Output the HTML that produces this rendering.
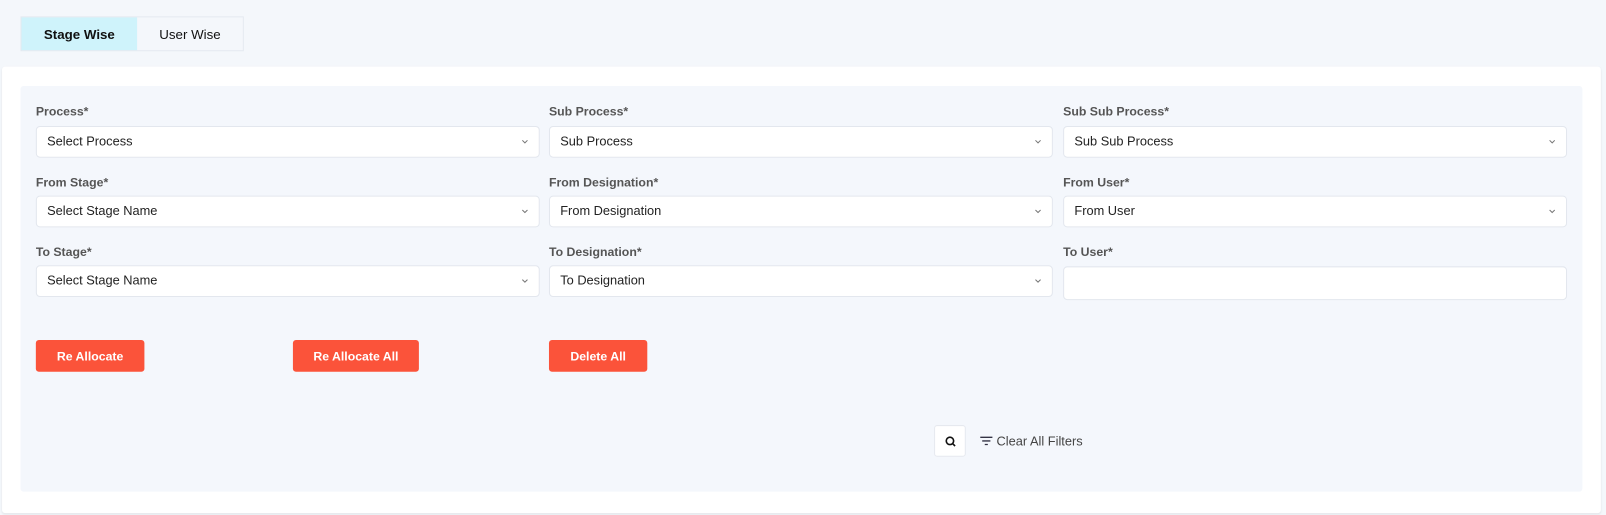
<!DOCTYPE html>
<html><head><style>
*{box-sizing:border-box;margin:0;padding:0}
body{width:1606px;height:515px;background:#f4f7fb;font-family:"Liberation Sans",sans-serif;overflow:hidden}
#w{position:relative;width:1568px;height:503px;transform:scale(1.0242);transform-origin:0 0}
.tabs{position:absolute;left:20px;top:16px;height:34px;width:218px;border:1px solid #e3e8ef;display:flex;font-size:13px;color:#111}
.tabs div{display:flex;align-items:center;justify-content:center}
.t1{width:113px;background:#cff3fb;font-weight:bold}
.t2{flex:1;background:#f4f7fb}
.card{position:absolute;left:2px;top:65px;width:1561px;height:436px;background:#fff;border-radius:3px;box-shadow:0 1px 2px rgba(0,0,0,.08)}
.panel{position:absolute;left:20px;top:84px;width:1525px;height:396px;background:#f4f7fc;border-radius:3px}
.lab{position:absolute;font-size:12px;font-weight:bold;color:#555}
.inp{position:absolute;width:492px;height:31px;background:#fff;border:1px solid #e3e7ee;border-radius:4px;font-size:12.5px;color:#222;padding-left:10px;line-height:29px}
.inp svg{position:absolute;right:10px;top:12px}
.btn{position:absolute;top:332px;height:31px;background:#fb533a;color:#fff;font-size:12px;font-weight:bold;border-radius:3px;display:flex;align-items:center;justify-content:center}
</style></head><body><div id="w">
<div class="tabs"><div class="t1">Stage Wise</div><div class="t2">User Wise</div></div>
<div class="card"></div>
<div class="panel"></div>

<div class="lab" style="left:35px;top:102px">Process*</div>
<div class="lab" style="left:536px;top:102px">Sub Process*</div>
<div class="lab" style="left:1038px;top:102px">Sub Sub Process*</div>
<div class="inp" style="left:35px;top:123px">Select Process<svg width="7" height="5"><path d="M1 1l2.5 2.5L6 1" stroke="#777" fill="none"/></svg></div>
<div class="inp" style="left:536px;top:123px">Sub Process<svg width="7" height="5"><path d="M1 1l2.5 2.5L6 1" stroke="#777" fill="none"/></svg></div>
<div class="inp" style="left:1038px;top:123px">Sub Sub Process<svg width="7" height="5"><path d="M1 1l2.5 2.5L6 1" stroke="#777" fill="none"/></svg></div>

<div class="lab" style="left:35px;top:171px">From Stage*</div>
<div class="lab" style="left:536px;top:171px">From Designation*</div>
<div class="lab" style="left:1038px;top:171px">From User*</div>
<div class="inp" style="left:35px;top:191px">Select Stage Name<svg width="7" height="5"><path d="M1 1l2.5 2.5L6 1" stroke="#777" fill="none"/></svg></div>
<div class="inp" style="left:536px;top:191px">From Designation<svg width="7" height="5"><path d="M1 1l2.5 2.5L6 1" stroke="#777" fill="none"/></svg></div>
<div class="inp" style="left:1038px;top:191px">From User<svg width="7" height="5"><path d="M1 1l2.5 2.5L6 1" stroke="#777" fill="none"/></svg></div>

<div class="lab" style="left:35px;top:239px">To Stage*</div>
<div class="lab" style="left:536px;top:239px">To Designation*</div>
<div class="lab" style="left:1038px;top:239px">To User*</div>
<div class="inp" style="left:35px;top:259px">Select Stage Name<svg width="7" height="5"><path d="M1 1l2.5 2.5L6 1" stroke="#777" fill="none"/></svg></div>
<div class="inp" style="left:536px;top:259px">To Designation<svg width="7" height="5"><path d="M1 1l2.5 2.5L6 1" stroke="#777" fill="none"/></svg></div>
<div class="inp" style="left:1038px;top:260px;height:33px"></div>

<div class="btn" style="left:35px;width:106px">Re Allocate</div>
<div class="btn" style="left:286px;width:123px">Re Allocate All</div>
<div class="btn" style="left:536px;width:96px">Delete All</div>

<div style="position:absolute;left:912px;top:415px;width:31px;height:31px;background:#fff;border:1px solid #e6e9ef;border-radius:3px">
<svg width="31" height="31"><circle cx="14.5" cy="14.5" r="3.6" stroke="#111" stroke-width="1.6" fill="none"/><path d="M17 17l2.5 2.5" stroke="#111" stroke-width="1.6"/></svg></div>
<svg style="position:absolute;left:957px;top:426px" width="12" height="9"><path d="M0 1h12M2 4.5h8M4.5 8h3" stroke="#334" stroke-width="1.3"/></svg>
<div style="position:absolute;left:973px;top:424px;font-size:12.5px;color:#444">Clear All Filters</div>
</div></body></html>
